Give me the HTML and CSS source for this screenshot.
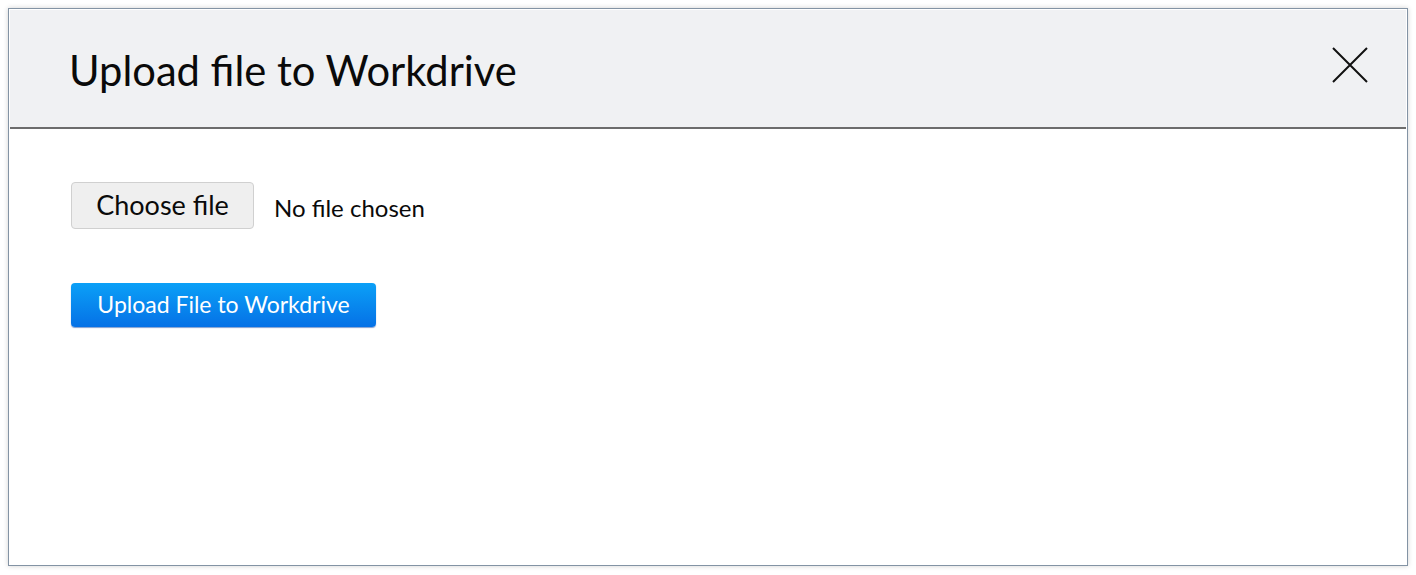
FILE: index.html
```html
<!DOCTYPE html>
<html lang="en">
<head>
<meta charset="utf-8">
<title>Upload file to Workdrive</title>
<link rel="stylesheet" href="styles.css">
</head>
<body>
<div class="dialog">
  <header class="dialog-header">
    <h1 class="dialog-title">Upload file to Workdrive</h1>
    <button class="close-btn" aria-label="Close">
      <svg width="36" height="36" viewBox="0 0 36 36"><path d="M1 1 L35 35 M35 1 L1 35" stroke="#111" stroke-width="2" fill="none"/></svg>
    </button>
  </header>
  <div class="dialog-body">
    <div class="file-row">
      <label class="choose-btn">Choose file</label>
      <span class="file-status">No file chosen</span>
    </div>
    <button class="upload-btn">Upload File to Workdrive</button>
  </div>
</div>
</body>
</html>
```
FILE: styles.css
```css
html, body {
  margin: 0;
  padding: 0;
  background: #ffffff;
}
body {
  font-family: Lato, "Liberation Sans", sans-serif;
  padding: 8px;
}
.dialog {
  box-sizing: border-box;
  width: 1400px;
  height: 558px;
  border: 1px solid #8393a4;
  padding: 1px;
  background: #fff;
  box-shadow: 0 0 5px rgba(0, 0, 0, 0.18);
  display: flex;
  flex-direction: column;
}
.dialog-header {
  height: 117px;
  flex: none;
  background: #f0f1f3;
  border-bottom: 2px solid #6c6c6c;
  display: flex;
  align-items: center;
  justify-content: space-between;
  padding: 0 38px 0 59px;
}
.dialog-title {
  margin: 0;
  font-size: 41.7px;
  font-weight: 400;
  color: #0a0a0a;
  letter-spacing: 0;
  padding-top: 2px;
}
.close-btn {
  border: 0;
  background: transparent;
  padding: 0;
  width: 36px;
  height: 36px;
  margin-top: -8px;
  cursor: pointer;
}
.close-btn svg { display: block; }
.dialog-body {
  padding: 53px 61px;
}
.file-row {
  display: flex;
  align-items: center;
  gap: 20px;
}
.choose-btn {
  box-sizing: border-box;
  width: 183px;
  height: 47px;
  background: #efefef;
  border: 1px solid #d0d0d0;
  border-radius: 4px;
  display: flex;
  align-items: center;
  justify-content: center;
  font-size: 27px;
  color: #0a0a0a;
  padding-bottom: 2px;
}
.file-status {
  font-size: 24px;
  color: #0a0a0a;
  padding-top: 3px;
}
.upload-btn {
  margin-top: 54px;
  box-sizing: border-box;
  width: 305px;
  height: 44px;
  border: 0;
  border-radius: 4px;
  background: linear-gradient(#0ba0f7, #0571e6);
  box-shadow: 0 1px 1px rgba(0, 60, 160, 0.5);
  color: #fff;
  font-family: Lato, "Liberation Sans", sans-serif;
  font-size: 23px;
  padding: 0 0 2px;
}
```
